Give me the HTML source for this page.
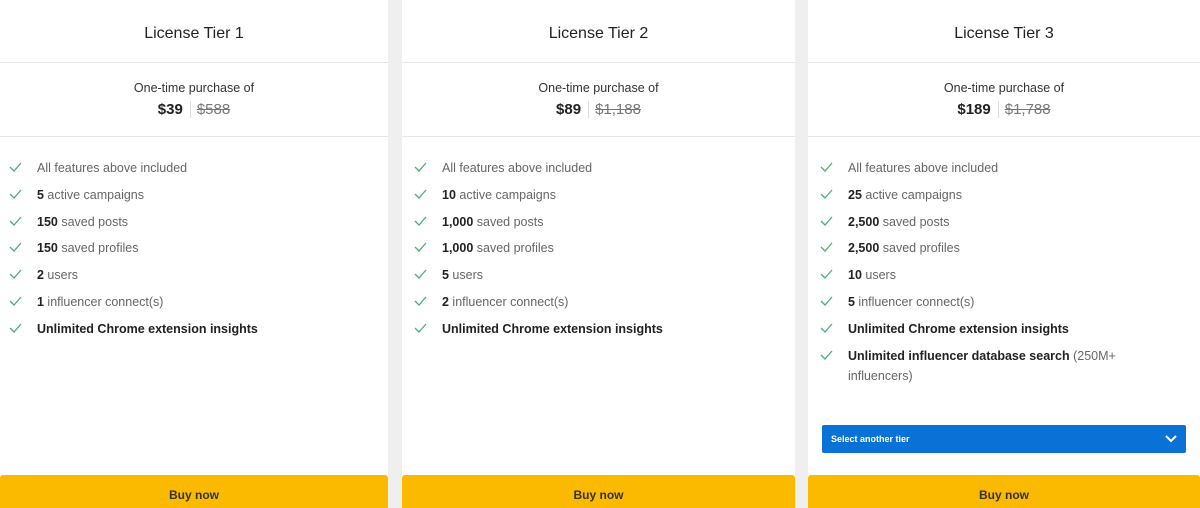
<!DOCTYPE html><html><head><style>
html,body{margin:0;width:1200px;height:508px;overflow:hidden}
body{background:#efefef;font-family:"Liberation Sans",Arial,sans-serif;position:relative}
.card{position:absolute;top:0;height:508px;background:#fff}
.h{height:62px;border-bottom:1px solid #e6e6e6;text-align:center;line-height:68px;font-size:16px;color:#222}
.p{height:73px;border-bottom:1px solid #e6e6e6;text-align:center;font-size:12.5px;color:#333}
.p .a{padding-top:18px}
.p .b{margin-top:6px;font-size:15px}
.p .b b{color:#222;padding-right:7px;border-right:1px solid #ddd}
.p .b s{color:#777;padding-left:6px}
ul{list-style:none;margin:0;padding:21px 0 0 0}
li{position:relative;padding-left:40px;font-size:12.5px;color:#666;line-height:20px;margin-bottom:6.8px;padding-right:60px}
li b{color:#222}
li svg{position:absolute;left:12px;top:4px}
.c1 li{padding-left:37px}.c1 li svg{left:9px}
.buy{position:absolute;left:0;right:0;top:475px;height:33px;background:#fbb900;border-radius:3px 3px 0 0;text-align:center;line-height:40px;font-size:12px;font-weight:bold;color:#333}
.sel{position:absolute;left:14px;right:14px;top:425px;height:28px;background:#0a72d6;border-radius:2px;color:#fff;font-size:9px;font-weight:bold;line-height:28px;padding-left:9px}
</style></head><body>
<div class="card c1" style="left:0;width:388px">
<div class="h">License Tier 1</div>
<div class="p"><div class="a">One-time purchase of</div><div class="b"><b>$39</b><s>$588</s></div></div>
<ul>
<li><svg width="13" height="10"><path d="M1 5l4 4 7-8" stroke="#4caf7a" fill="none" stroke-width="1.3"/></svg>All features above included</li>
<li><svg width="13" height="10"><path d="M1 5l4 4 7-8" stroke="#4caf7a" fill="none" stroke-width="1.3"/></svg><b>5</b> active campaigns</li>
<li><svg width="13" height="10"><path d="M1 5l4 4 7-8" stroke="#4caf7a" fill="none" stroke-width="1.3"/></svg><b>150</b> saved posts</li>
<li><svg width="13" height="10"><path d="M1 5l4 4 7-8" stroke="#4caf7a" fill="none" stroke-width="1.3"/></svg><b>150</b> saved profiles</li>
<li><svg width="13" height="10"><path d="M1 5l4 4 7-8" stroke="#4caf7a" fill="none" stroke-width="1.3"/></svg><b>2</b> users</li>
<li><svg width="13" height="10"><path d="M1 5l4 4 7-8" stroke="#4caf7a" fill="none" stroke-width="1.3"/></svg><b>1</b> influencer connect(s)</li>
<li><svg width="13" height="10"><path d="M1 5l4 4 7-8" stroke="#4caf7a" fill="none" stroke-width="1.3"/></svg><b>Unlimited Chrome extension insights</b></li>
</ul>
<div class="buy">Buy now</div></div>
<div class="card" style="left:402px;width:393px">
<div class="h">License Tier 2</div>
<div class="p"><div class="a">One-time purchase of</div><div class="b"><b>$89</b><s>$1,188</s></div></div>
<ul>
<li><svg width="13" height="10"><path d="M1 5l4 4 7-8" stroke="#4caf7a" fill="none" stroke-width="1.3"/></svg>All features above included</li>
<li><svg width="13" height="10"><path d="M1 5l4 4 7-8" stroke="#4caf7a" fill="none" stroke-width="1.3"/></svg><b>10</b> active campaigns</li>
<li><svg width="13" height="10"><path d="M1 5l4 4 7-8" stroke="#4caf7a" fill="none" stroke-width="1.3"/></svg><b>1,000</b> saved posts</li>
<li><svg width="13" height="10"><path d="M1 5l4 4 7-8" stroke="#4caf7a" fill="none" stroke-width="1.3"/></svg><b>1,000</b> saved profiles</li>
<li><svg width="13" height="10"><path d="M1 5l4 4 7-8" stroke="#4caf7a" fill="none" stroke-width="1.3"/></svg><b>5</b> users</li>
<li><svg width="13" height="10"><path d="M1 5l4 4 7-8" stroke="#4caf7a" fill="none" stroke-width="1.3"/></svg><b>2</b> influencer connect(s)</li>
<li><svg width="13" height="10"><path d="M1 5l4 4 7-8" stroke="#4caf7a" fill="none" stroke-width="1.3"/></svg><b>Unlimited Chrome extension insights</b></li>
</ul>
<div class="buy">Buy now</div></div>
<div class="card" style="left:808px;width:392px">
<div class="h">License Tier 3</div>
<div class="p"><div class="a">One-time purchase of</div><div class="b"><b>$189</b><s>$1,788</s></div></div>
<ul>
<li><svg width="13" height="10"><path d="M1 5l4 4 7-8" stroke="#4caf7a" fill="none" stroke-width="1.3"/></svg>All features above included</li>
<li><svg width="13" height="10"><path d="M1 5l4 4 7-8" stroke="#4caf7a" fill="none" stroke-width="1.3"/></svg><b>25</b> active campaigns</li>
<li><svg width="13" height="10"><path d="M1 5l4 4 7-8" stroke="#4caf7a" fill="none" stroke-width="1.3"/></svg><b>2,500</b> saved posts</li>
<li><svg width="13" height="10"><path d="M1 5l4 4 7-8" stroke="#4caf7a" fill="none" stroke-width="1.3"/></svg><b>2,500</b> saved profiles</li>
<li><svg width="13" height="10"><path d="M1 5l4 4 7-8" stroke="#4caf7a" fill="none" stroke-width="1.3"/></svg><b>10</b> users</li>
<li><svg width="13" height="10"><path d="M1 5l4 4 7-8" stroke="#4caf7a" fill="none" stroke-width="1.3"/></svg><b>5</b> influencer connect(s)</li>
<li><svg width="13" height="10"><path d="M1 5l4 4 7-8" stroke="#4caf7a" fill="none" stroke-width="1.3"/></svg><b>Unlimited Chrome extension insights</b></li>
<li><svg width="13" height="10"><path d="M1 5l4 4 7-8" stroke="#4caf7a" fill="none" stroke-width="1.3"/></svg><b>Unlimited influencer database search</b> (250M+ influencers)</li>
</ul>
<div class="sel">Select another tier<svg style="position:absolute;right:9px;top:10px" width="12" height="8"><path d="M1 1l5 5 5-5" stroke="#fff" fill="none" stroke-width="2"/></svg></div>
<div class="buy">Buy now</div></div>
</body></html>
